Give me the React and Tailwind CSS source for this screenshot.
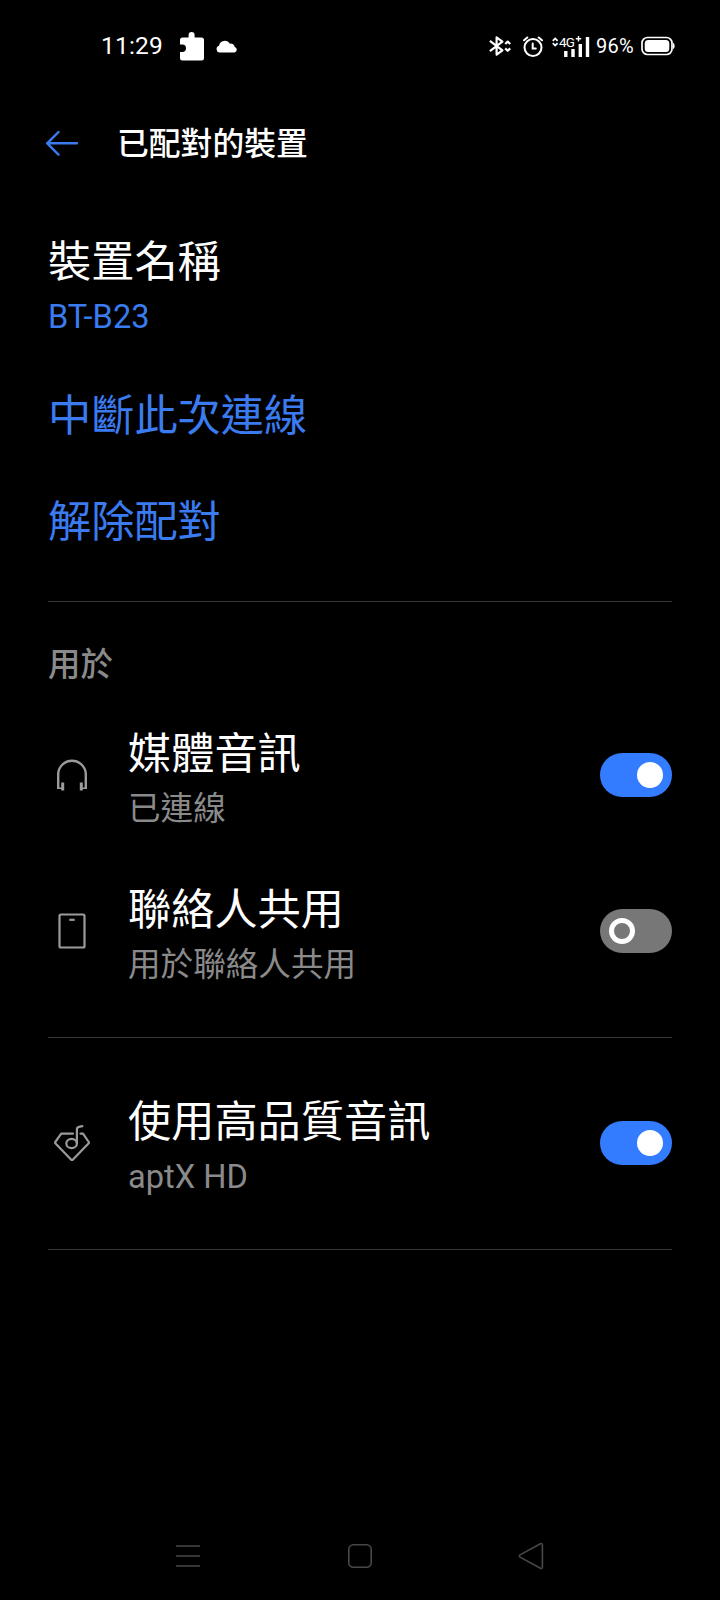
import { useState } from 'react'
import clsx from 'clsx'

const PuzzleIcon = () => (
  <svg width="24" height="30" viewBox="0 0 24 30" fill="#fff">
    <path d="M2.5 6.500H8.600V4a3 3 0 0 1 6 0V6.500h6.900A2.500 2.500 0 0 1 24 9v18a2.500 2.500 0 0 1-2.500 2.500h-19A2.500 2.500 0 0 1 0 27V21H2.300a3.700 3.700 0 0 0 0-7.400H0V9A2.500 2.500 0 0 1 2.500 6.500z" />
  </svg>
)

const CloudIcon = () => (
  <svg width="22" height="13" viewBox="0 0 22 13" fill="#fff">
    <path d="M3.6 12.6a3.5 3.5 0 0 1-.6-6.8A6 6 0 0 1 14 3.7a4 4 0 0 1 4.8 3.2 3 3 0 0 1-.2 5.7z" />
  </svg>
)

const BluetoothIcon = () => (
  <svg width="22" height="20" viewBox="0 0 22 20" fill="none" stroke="#fff" strokeWidth="2.2" strokeLinejoin="round">
    <path d="M0.9 4.8 13.4 14.4 7.6 18.6V1.4L13.4 5.6 0.9 15.2" />
    <path d="M16.2 8 18.7 5.6 21.2 8M16.2 12.4 18.7 14.8 21.2 12.4" />
  </svg>
)

const AlarmIcon = () => (
  <svg width="20" height="21" viewBox="0 0 20 21" fill="none" stroke="#fff" strokeWidth="2" strokeLinecap="round">
    <circle cx="10" cy="11.5" r="8.5" />
    <path d="M1 4.3 4.3 1.5M19 4.3 15.7 1.5" />
    <path d="M9.7 7.5V12.500H12.800" />
  </svg>
)

const SignalIcon = () => (
  <div className="relative h-[21px] w-[38px]">
    <svg className="absolute inset-0" width="38" height="21" viewBox="0 0 38 21" fill="none" stroke="#fff">
      <path d="M0.8 4.8 3.2 2.4 5.6 4.8M0.8 7.2 3.2 9.6 5.6 7.2" strokeWidth="1.8" />
      <path d="M13.8 15v6M21 13v8M28.3 8v13M35.5 1v20" strokeWidth="3.4" />
      <path d="M26.5 0v5.4M23.8 2.700h5.400" strokeWidth="1.400" />
    </svg>
    <span className="absolute top-0 left-[7px] text-[13.5px] leading-[12px] tracking-[-0.9px]">4G</span>
  </div>
)

const BatteryIcon = () => (
  <svg width="34" height="20" viewBox="0 0 34 20" fill="none">
    <rect x="1" y="1.5" width="30" height="17" rx="5.5" stroke="#fff" strokeWidth="1.7" />
    <rect x="3.7" y="4" width="24.6" height="12" rx="3.5" fill="#fff" />
    <path d="M32 6.8c2.2 1.3 2.2 5.1 0 6.4z" fill="#fff" />
  </svg>
)

const BackIcon = () => (
  <svg width="34" height="26" viewBox="0 0 34 26" fill="none" stroke="#3a7bf0" strokeWidth="2.4" strokeLinecap="round" strokeLinejoin="round">
    <path d="M32 13.3H2.2M13.5 2 2.2 13.3 13.5 24.6" />
  </svg>
)

const HeadphonesIcon = () => (
  <svg width="36" height="36" viewBox="0 0 36 36" fill="none" stroke="#9b9b9b">
    <path d="M4.2 32V17.500a13.800 13.800 0 0 1 27.600 0V32" strokeWidth="2.400" />
    <path d="M8.700 25.500v8M27.300 25.500v8" strokeWidth="3" />
    <path d="M4 31.200h4M28 31.200h4" strokeWidth="1.600" />
  </svg>
)

const PhoneIcon = () => (
  <svg width="36" height="36" viewBox="0 0 36 36" fill="none" stroke="#9b9b9b" strokeWidth="2.2">
    <rect x="5.5" y="1.5" width="25" height="33" rx="1.5" />
    <path d="M15.3 6.8h5.400" />
  </svg>
)

const HiResIcon = () => (
  <svg width="36" height="36" viewBox="0 0 36 36" fill="none" stroke="#9b9b9b" strokeWidth="2.2" strokeLinecap="round" strokeLinejoin="round">
    <path d="M19 8.6H7.2L1.3 17a1 1 0 0 0 0 1.2L17 34.6a1.4 1.4 0 0 0 2 0L34.7 18.2a1 1 0 0 0 0-1.2L29 8.6H26.5" />
    <ellipse cx="17.6" cy="18.5" rx="5.3" ry="4.6" />
    <path d="M22.9 18.5V4.5Q22.9 2.2 25 1.8L28.3 1.2" />
  </svg>
)

const Switch = ({ checked, onChange }) => (
  <button
    role="switch"
    aria-checked={checked}
    onClick={() => onChange(!checked)}
    className={clsx('flex h-11 w-[72px] shrink-0 items-center rounded-full px-[9px]', checked ? 'justify-end bg-[#347cff]' : 'justify-start bg-[#777777]')}
  >
    <span className={clsx('size-[26px] rounded-full', checked ? 'bg-white' : 'border-[5.5px] border-white')} />
  </button>
)

const Divider = () => <div className="mx-12 h-px bg-[#383838]" />

const ProfileRow = ({ icon, title, summary, defaultOn }) => {
  const [on, setOn] = useState(defaultOn)

  return (
    <div className="flex h-[156px] items-center px-12">
      <div className="ml-1.5 flex w-[74px] shrink-0 items-center">{icon}</div>
      <div className="flex-1 pt-1.5">
        <div className="text-[43.2px] leading-[63px]">{title}</div>
        <div className="text-[32.6px] leading-[47px] text-[#8a8a8a]">{summary}</div>
      </div>
      <Switch checked={on} onChange={setOn} />
    </div>
  )
}

export default function App() {
  return (
    <div lang="zh-Hant" className="flex h-[1600px] w-[720px] flex-col bg-black font-[Roboto,'Noto_Sans_CJK_TC',sans-serif] text-white">
      <div className="flex h-[92px] items-center justify-between pr-[45px] pl-[101px]">
        <div className="flex items-center">
          <span className="w-[79px] text-[24.5px] tracking-[0.2px]">11:29</span>
          <PuzzleIcon />
          <span className="ml-3">
            <CloudIcon />
          </span>
        </div>
        <div className="flex items-center">
          <BluetoothIcon />
          <span className="ml-3">
            <AlarmIcon />
          </span>
          <span className="ml-[9px]">
            <SignalIcon />
          </span>
          <span className="ml-1.5 w-[45px] text-[20px] tracking-[0.3px]">96%</span>
          <BatteryIcon />
        </div>
      </div>

      <div className="flex h-[102px] items-center pl-[45px]">
        <button aria-label="返回">
          <BackIcon />
        </button>
        <h1 className="ml-[38px] pt-px text-[31.8px] leading-[46px] font-medium">已配對的裝置</h1>
      </div>

      <div className="mt-3 flex h-[156px] flex-col justify-center px-12 pt-1">
        <div className="text-[43.2px] leading-[63px]">裝置名稱</div>
        <div className="text-[32.6px] leading-[47px] text-[#3a7bf0]">BT-B23</div>
      </div>
      <button className="flex h-[106px] items-center px-12 pt-[5px] text-[43.2px] text-[#3a7bf0]">中斷此次連線</button>
      <button className="flex h-[106px] items-center px-12 pt-[5px] text-[43.2px] text-[#3a7bf0]">解除配對</button>

      <div className="py-[27px]">
        <Divider />
      </div>

      <div className="flex h-[68px] items-center px-12 pt-1 text-[32.4px] font-medium text-[#8a8a8a]">用於</div>
      <ProfileRow icon={<HeadphonesIcon />} title="媒體音訊" summary="已連線" defaultOn />
      <ProfileRow icon={<PhoneIcon />} title="聯絡人共用" summary="用於聯絡人共用" defaultOn={false} />

      <div className="pt-7 pb-[27px]">
        <Divider />
      </div>

      <ProfileRow icon={<HiResIcon />} title="使用高品質音訊" summary="aptX HD" defaultOn />

      <div className="pt-7">
        <Divider />
      </div>

      <div className="mt-auto flex h-[88px] items-center justify-center">
        <button className="flex w-[172px] justify-center">
          <svg width="26" height="28" viewBox="0 0 26 28" fill="none" stroke="#484848" strokeWidth="1.6">
            <path d="M1 4h24M1 14h24M1 24h24" />
          </svg>
        </button>
        <button className="flex w-[172px] justify-center">
          <svg width="26" height="28" viewBox="0 0 26 28" fill="none" stroke="#484848" strokeWidth="1.6">
            <rect x="1.8" y="2.8" width="22.4" height="22.4" rx="4.5" />
          </svg>
        </button>
        <button className="flex w-[172px] justify-center">
          <svg width="28" height="28" viewBox="0 0 28 28" fill="none" stroke="#484848" strokeWidth="1.6" strokeLinejoin="round">
            <path d="M22.4 1.7a1.3 1.3 0 0 1 2 1.1v22.4a1.3 1.3 0 0 1-2 1.1L2 15.1a1.3 1.3 0 0 1 0-2.2z" />
          </svg>
        </button>
      </div>
    </div>
  )
}
